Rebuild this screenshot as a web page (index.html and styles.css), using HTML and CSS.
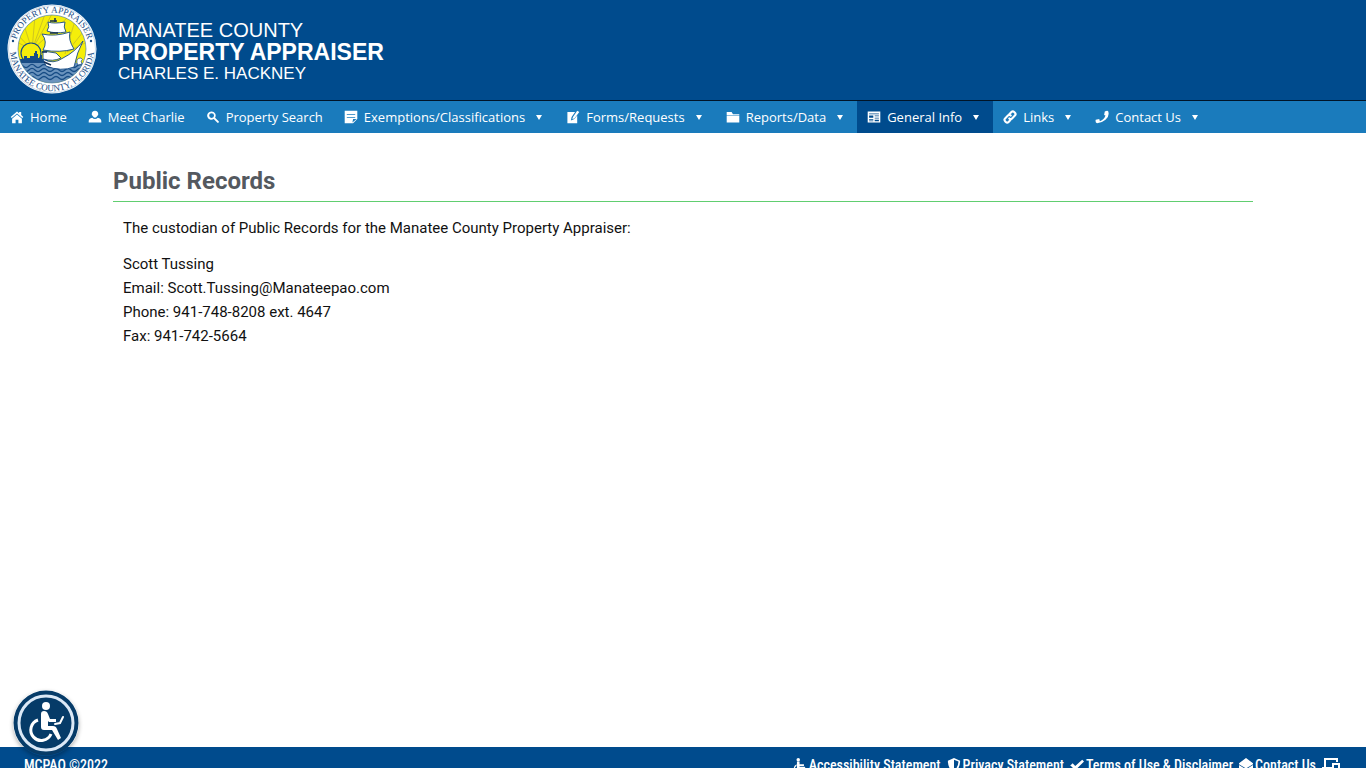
FILE: index.html
```html
<!DOCTYPE html>
<html lang="en">
<head>
  <meta charset="UTF-8">
  <meta name="viewport" content="width=device-width, initial-scale=1.0">
  <title>Public Records - Manatee County Property Appraiser</title>
  <link rel="stylesheet" href="styles.css">
</head>
<body>

<header class="header">
  <a href="#" class="brand" aria-label="Manatee County Property Appraiser home">
    <svg class="seal" viewBox="0 0 90 90" aria-hidden="true">
      <defs>
        <path id="arcTop" d="M9 53A36.800 36.800 0 1 1 81 53"/>
        <path id="arcBottom" d="M4 36A42 42 0 1 0 86 36"/>
        <clipPath id="disc"><circle cx="45" cy="45" r="34"/></clipPath>
      </defs>
      <circle cx="45" cy="45" r="44.500" fill="#fff"/>
      <circle cx="45" cy="45" r="43.500" fill="none" stroke="#8fb2d2" stroke-width=".5"/>
      <g clip-path="url(#disc)">
        <rect x="10" y="10" width="70" height="70" fill="#f5ee0a"/>
        <g stroke="#b4a832" stroke-width=".6">
          <path d="M25 46 10 30M25 46 17 21M25 46 28 12M25 46 38 10M25 46 45 10M25 46 60 14M25 46 10 38M70 10 58 50M80 23 60 48M80 38 60 48"/>
        </g>
        <circle cx="24" cy="49" r="10" fill="#f5ee0a" stroke="#174c85" stroke-width="1.200"/>
        <path d="M10 60V55h7v-3h3v2h3v-2h4v-3h1v-2h2v3h1v4h2v-3h2v4h6v5z" fill="#174c85"/>
        <rect x="10" y="59" width="70" height="21" fill="#6a93bd"/>
        <path d="M10 62q3-3 6 0t6 0 6 0 6 0 6 0 6 0 6 0 6 0 6 0 6 0 6 0 6 0M10 66q3-3 6 0t6 0 6 0 6 0 6 0 6 0 6 0 6 0 6 0 6 0 6 0 6 0M10 70q3-3 6 0t6 0 6 0 6 0 6 0 6 0 6 0 6 0 6 0 6 0 6 0 6 0M10 74q3-3 6 0t6 0 6 0 6 0 6 0 6 0 6 0 6 0 6 0 6 0 6 0 6 0" fill="none" stroke="#174c85" stroke-width="1.200"/>
      </g>
      <g fill="#fff" stroke="#174c85" stroke-width=".9" stroke-linejoin="round">
        <path d="M36 55Q46 61 56 54Q68 48 76 37Q70 48 67 63Q54 68 39 62Z"/>
        <path d="M41 18Q47 20 58 18Q56 23 59 28Q48 30 40 27Q43 23 41 18Z"/>
        <path d="M35 30Q48 33 63 28Q61 36 67 45Q53 49 36 46Q41 38 35 30Z"/>
        <path d="M36 47 49 49 54 54Q46 58 36 55Z"/>
      </g>
      <path d="M43 17h7M48 14v4M43 29h8M35 48h5M37 58l7 3" stroke="#102e55" stroke-width="1.500"/>
      <path d="M70 59q-1-5 4-5q3 2 0 3l1 3-4 1z" fill="#fff" stroke="#174c85" stroke-width=".7"/>
      <circle cx="45" cy="45" r="34" fill="none" stroke="#3e75aa" stroke-width=".6"/>
      <g class="seal-text" text-anchor="middle">
        <text><textPath href="#arcTop" startOffset="50%">PROPERTY APPRAISER</textPath></text>
        <text><textPath href="#arcBottom" startOffset="50%">MANATEE COUNTY, FLORIDA</textPath></text>
      </g>
      <circle cx="6" cy="37" r="1.200" fill="#174c85"/>
      <circle cx="84" cy="37" r="1.200" fill="#174c85"/>
    </svg>
    <span class="brand-text">
      <span class="brand-county">MANATEE COUNTY</span>
      <span class="brand-office">PROPERTY APPRAISER</span>
      <span class="brand-name">CHARLES E. HACKNEY</span>
    </span>
  </a>
</header>

<nav class="nav" aria-label="Main">
  <a href="#"><svg class="icon" viewBox="0 0 20 20"><path d="M10 2 1 10l1.500 1.500L10 5l7.500 6.500L19 10l-3-2.700V3h-3v1.700zM10 6.500l-7 6V19h5v-5h4v5h5v-6.500z"/></svg>Home</a>
  <a href="#"><svg class="icon" viewBox="0 0 20 20"><path d="M10 1a4.500 4.500 0 0 0-3 8q1 2 3 2t3-2a4.500 4.500 0 0 0-3-8zM6 11q-5 1-5 5v2h18v-2q0-4-5-5-2 2-4 2t-4-2z"/></svg>Meet Charlie</a>
  <a href="#"><svg class="icon" viewBox="0 0 20 20"><path fill-rule="evenodd" d="M8 2a6 6 0 1 0 3 11l5 5q1 1 2 0t0-2l-5-5A6 6 0 0 0 8 2zm0 2.500a3.500 3.500 0 1 1 0 7 3.500 3.500 0 0 1 0-7z"/></svg>Property Search</a>
  <a href="#"><svg class="icon" viewBox="0 0 20 20"><path fill-rule="evenodd" d="M1 1h18v12l-6 6H1zM4 6v1h12V6zm0 4v1h12v-1zm8 8 1-5h5z"/></svg>Exemptions/Classifications<span class="arrow"></span></a>
  <a href="#"><svg class="icon" viewBox="0 0 20 20"><path d="M2 3h11l-5 7-1 5 5-2 4-5v11H2zM16 1l3 2-7 9-3 1 1-3z"/></svg>Forms/Requests<span class="arrow"></span></a>
  <a href="#"><svg class="icon" viewBox="0 0 20 20"><path d="M1 3h7l2 3h9v1H1zM1 8h18v10H1z"/></svg>Reports/Data<span class="arrow"></span></a>
  <a href="#" class="active"><svg class="icon" viewBox="0 0 20 20"><path fill-rule="evenodd" d="M1 2h18v16H1zM3 5v1h14V5zm0 3v3h6V8zm8 0v1h6V8zm0 3v1h6v-1zm-8 2v1h6v-1zm0 2v1h6v-1zm8-1v2h6v-2z"/></svg>General Info<span class="arrow"></span></a>
  <a href="#"><svg class="icon" viewBox="0 0 20 20"><g fill="none" stroke="currentColor" stroke-width="3" stroke-linecap="round"><path d="m9 6 3-3q2-2 4 0l1 1q2 2 0 4l-4 4q-2 2-4 0M11 14l-3 3q-2 2-4 0l-1-1q-2-2 0-4l4-4q2-2 4 0"/></g></svg>Links<span class="arrow"></span></a>
  <a href="#"><svg class="icon" viewBox="0 0 20 20"><path d="m13 7 1-5q4-2 5 0 2 7-4 12T3 19q-3-1-2-5l5-1 1 3q6-2 8-8z"/></svg>Contact Us<span class="arrow"></span></a>
</nav>

<main class="content">
  <h1>Public Records</h1>
  <div class="records">
    <p>The custodian of Public Records for the Manatee County Property Appraiser:</p>
    <p>Scott Tussing<br>
    Email: Scott.Tussing@Manateepao.com<br>
    Phone: 941-748-8208 ext. 4647<br>
    Fax: 941-742-5664</p>
  </div>
</main>

<footer class="footer">
  <span>MCPAO ©2022</span>
  <div class="footer-links">
    <a href="#"><svg class="icon" viewBox="0 0 16 16"><circle cx="6" cy="2" r="2"/><path d="M4.500 4h3v3h5v2h-5v1h6l2 4-2 1-2-3h-7zM4 7v2q-3 2-1 5 3 3 7 0l1 2q-5 3-9-1-3-5 2-8z"/></svg>Accessibility Statement</a>
    <a href="#"><svg class="icon" viewBox="0 0 16 16"><path fill-rule="evenodd" d="m8 0 7 3q0 10-7 13Q1 13 1 3zm0 2v12q5-3 5-10z"/></svg>Privacy Statement</a>
    <a href="#"><svg class="icon" viewBox="0 0 16 16"><path d="m1 8 2-2 3 3 8-7 2 2L6 14 0 8z"/></svg>Terms of Use &amp; Disclaimer</a>
    <a href="#"><svg class="icon" viewBox="0 0 16 16"><path d="m8 0 8 6v1l-8 5-8-5V6zM0 8l8 5 8-5v8H0z"/></svg>Contact Us</a>
    <a href="#" aria-label="Desktop and mobile view"><svg class="icon devices" viewBox="0 0 18 16"><path d="M3 9V1h12v3M0 10h10M11 6h6v9h-6z" fill="none" stroke="currentColor" stroke-width="2"/></svg></a>
  </div>
</footer>

<button class="access" aria-label="Accessibility options">
  <svg viewBox="0 0 66 66" aria-hidden="true">
    <circle cx="33" cy="33" r="32.500" fill="#063b68"/>
    <circle cx="33" cy="33" r="27" fill="none" stroke="#dbe8f6" stroke-width="3"/>
    <circle cx="33" cy="16" r="4" fill="#fff"/>
    <path d="M28 24q0-3 3-3t4 3l2 5h6v3h-7l-1-1v5h5q3 0 4 3l4 9-3 2-6-10H31q-3 0-3-3z" fill="#fff"/>
    <path d="m42 34 5-1 3-6" fill="none" stroke="#fff" stroke-width="2" stroke-linecap="round"/>
    <path d="M25 30a10.500 10.500 0 1 0 13 14" fill="none" stroke="#fff" stroke-width="3"/>
  </svg>
</button>

</body>
</html>
```
FILE: styles.css
```css
* {
  box-sizing: border-box;
}
body {
  margin: 0;
  height: 100vh;
  display: flex;
  flex-direction: column;
  overflow: hidden;
  background: #fff;
  color: #111;
  font-family: Roboto, sans-serif;
}
a {
  color: #fff;
  text-decoration: none;
}
.icon {
  width: 14px;
  height: 14px;
  fill: currentColor;
}

/* Header */
.header {
  background: #004b8d;
  border-bottom: 1px solid #001427;
  padding: 4px 7px 6px;
}
.brand {
  display: flex;
  gap: 21px;
}
.seal {
  width: 90px;
  height: 90px;
}
.seal-text {
  font-family: "Liberation Serif", serif;
  font-size: 9px;
  fill: #174c85;
}
.brand-text {
  display: flex;
  flex-direction: column;
  padding-top: 15px;
  font-family: "Liberation Sans", sans-serif;
}
.brand-county {
  font-size: 20px;
  line-height: 22px;
}
.brand-office {
  font-size: 23px;
  line-height: 23px;
  font-weight: bold;
}
.brand-name {
  font-size: 17px;
  line-height: 20px;
}

/* Navigation */
.nav {
  display: flex;
  background: #1a7bbc;
  font-family: "Segoe UI", "Open Sans", sans-serif;
  font-size: 13px;
}
.nav a {
  display: flex;
  align-items: center;
  height: 32px;
  padding: 0 11px 0 10px;
  white-space: nowrap;
}
.nav .icon {
  margin-right: 6px;
}
.nav a:hover,
.nav .active {
  background: #004b8d;
}
.arrow {
  margin: 0 3px 0 11px;
  border: 3px solid transparent;
  border-top: 5px solid #fff;
  border-bottom: 0;
}

/* Content */
.content {
  flex: 1;
  width: 100%;
  max-width: 1160px;
  margin: 0 auto;
  padding: 30px 10px 0;
}
h1 {
  margin: 0;
  padding-bottom: 2px;
  border-bottom: 1px solid #61ce70;
  color: #54595f;
  font-size: 24px;
  line-height: 36px;
}
.records {
  padding: 14px 10px;
  font-size: 15px;
  line-height: 24px;
}
.records p {
  margin: 0 0 12px;
}

/* Footer */
.footer {
  display: flex;
  justify-content: space-between;
  height: 21px;
  padding: 9px 26px 0 24px;
  background: #004b8d;
  color: #fff;
  font-family: "Roboto Condensed", Roboto, sans-serif;
  font-size: 14px;
  font-weight: 500;
  line-height: 18px;
}
.footer-links {
  display: flex;
  gap: 6px;
}
.footer-links a {
  display: flex;
  gap: 2px;
}
.footer-links .icon {
  margin-top: 2px;
}
.footer-links .devices {
  width: 18px;
  height: 16px;
}
.access {
  position: fixed;
  left: 13px;
  bottom: 12px;
  width: 66px;
  height: 66px;
  padding: 0;
  border: 0;
  border-radius: 50%;
  background: none;
  box-shadow: 0 2px 4px rgba(0,0,0,0.3);
  cursor: pointer;
}
.access svg {
  display: block;
}
```
